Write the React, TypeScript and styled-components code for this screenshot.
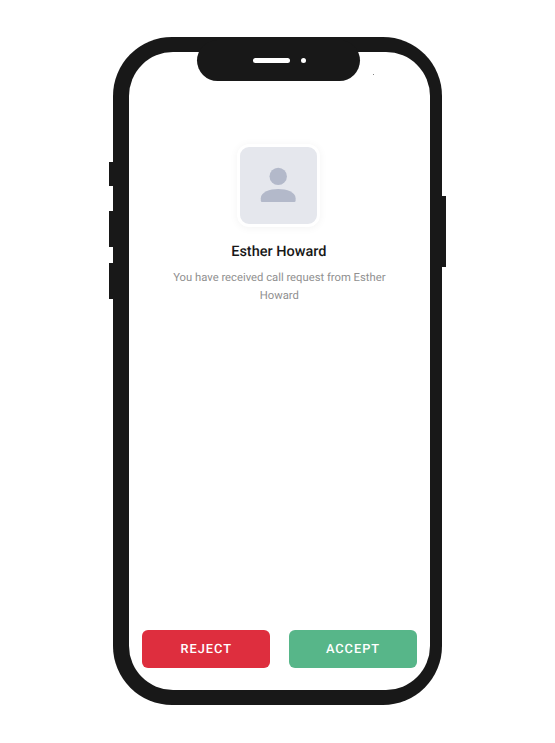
import React from "react";
import styled, { createGlobalStyle } from "styled-components";

const GlobalStyle = createGlobalStyle`
  *, *::before, *::after { box-sizing: border-box; }
  body {
    margin: 0;
    background: #fff;
    font-family: Roboto, "Liberation Sans", sans-serif;
    text-rendering: geometricPrecision;
  }
`;

const Page = styled.main`
  display: flex;
  justify-content: center;
  width: 555px;
  height: 743px;
  padding-top: 37px;
  background: #fff;
  overflow: hidden;
`;

const Phone = styled.div`
  position: relative;
  width: 329.6px;
  height: 668.3px;
  padding: 15px 12.5px 15.3px 16px;
  background: #181818;
  border-radius: 59px;
`;

const SideKey = styled.span<{ $side: "left" | "right"; $top: number; $height: number }>`
  position: absolute;
  ${({ $side }) => $side}: -3.7px;
  top: ${({ $top }) => $top}px;
  width: 8px;
  height: ${({ $height }) => $height}px;
  background: #181818;
`;

const Notch = styled.div`
  position: absolute;
  top: 2.7px;
  left: 84px;
  display: flex;
  align-items: center;
  gap: 11px;
  width: 163.6px;
  height: 41px;
  padding-left: 56.2px;
  background: #181818;
  border-radius: 20.5px;
`;

const Speaker = styled.span`
  width: 37px;
  height: 5.2px;
  border-radius: 3px;
  background: #fff;
`;

const Camera = styled.span`
  width: 5.2px;
  height: 5.2px;
  border-radius: 50%;
  background: #fff;
`;

const Speck = styled.span`
  position: absolute;
  top: 37px;
  left: 260.3px;
  width: 1px;
  height: 1px;
  background: #858585;
`;

const Screen = styled.section`
  display: flex;
  flex-direction: column;
  align-items: center;
  width: 100%;
  height: 100%;
  padding: 91.7px 12.8px 21.7px 13px;
  background: #fff;
  border-radius: 44px;
`;

const Avatar = styled.div`
  display: flex;
  align-items: center;
  justify-content: center;
  width: 83px;
  height: 83px;
  margin-right: 1.5px;
  border: 3px solid #fff;
  border-radius: 12px;
  background: #e5e7ed;
  box-shadow: 0 1px 8px rgba(0, 0, 0, 0.05);
`;

const Name = styled.h1`
  margin: 16px 1px 0 0;
  color: #181818;
  font-size: 14.5px;
  font-weight: 500;
  line-height: 18px;
`;

const Message = styled.p`
  width: 230px;
  margin: 8.8px 0 0;
  color: #909090;
  font-size: 11.25px;
  line-height: 17.6px;
  text-align: center;
`;

const Actions = styled.div`
  display: flex;
  justify-content: space-between;
  width: 100%;
  margin-top: auto;
`;

const ActionButton = styled.button<{ $color: string }>`
  width: 128.5px;
  height: 38.6px;
  padding: 1px 0 0 0.5px;
  border: 0;
  border-radius: 6px;
  background: ${({ $color }) => $color};
  color: #fff;
  font: 500 12.8px/38px Roboto, "Liberation Sans", sans-serif;
  letter-spacing: 0.98px;
  text-rendering: geometricPrecision;
`;

const Person = styled.svg`
  display: block;
  width: 36px;
  height: 36px;
  margin-right: 0.5px;
  fill: #b3b9ca;
`;

const PersonIcon = () => (
  <Person viewBox="0 0 36 36" aria-hidden="true">
    <circle cx="18.2" cy="9.4" r="8.7" />
    <path d="M.8 31.2C.8 25 9.6 21.9 18.2 21.9S35.6 25 35.6 31.2v2.5q0 1.3-1.3 1.3H2.1Q.8 35 .8 33.7Z" />
  </Person>
);

export default function App() {
  return (
    <>
      <GlobalStyle />
      <Page>
        <Phone>
          <SideKey $side="left" $top={125} $height={23.5} />
          <SideKey $side="left" $top={173.5} $height={36.3} />
          <SideKey $side="left" $top={225.5} $height={36.3} />
          <SideKey $side="right" $top={159} $height={71.3} />
          <Screen>
            <Avatar>
              <PersonIcon />
            </Avatar>
            <Name>Esther Howard</Name>
            <Message>You have received call request from Esther Howard</Message>
            <Actions>
              <ActionButton type="button" $color="#de2e3e">REJECT</ActionButton>
              <ActionButton type="button" $color="#57b689">ACCEPT</ActionButton>
            </Actions>
          </Screen>
          <Notch>
            <Speaker />
            <Camera />
          </Notch>
          <Speck />
        </Phone>
      </Page>
    </>
  );
}
